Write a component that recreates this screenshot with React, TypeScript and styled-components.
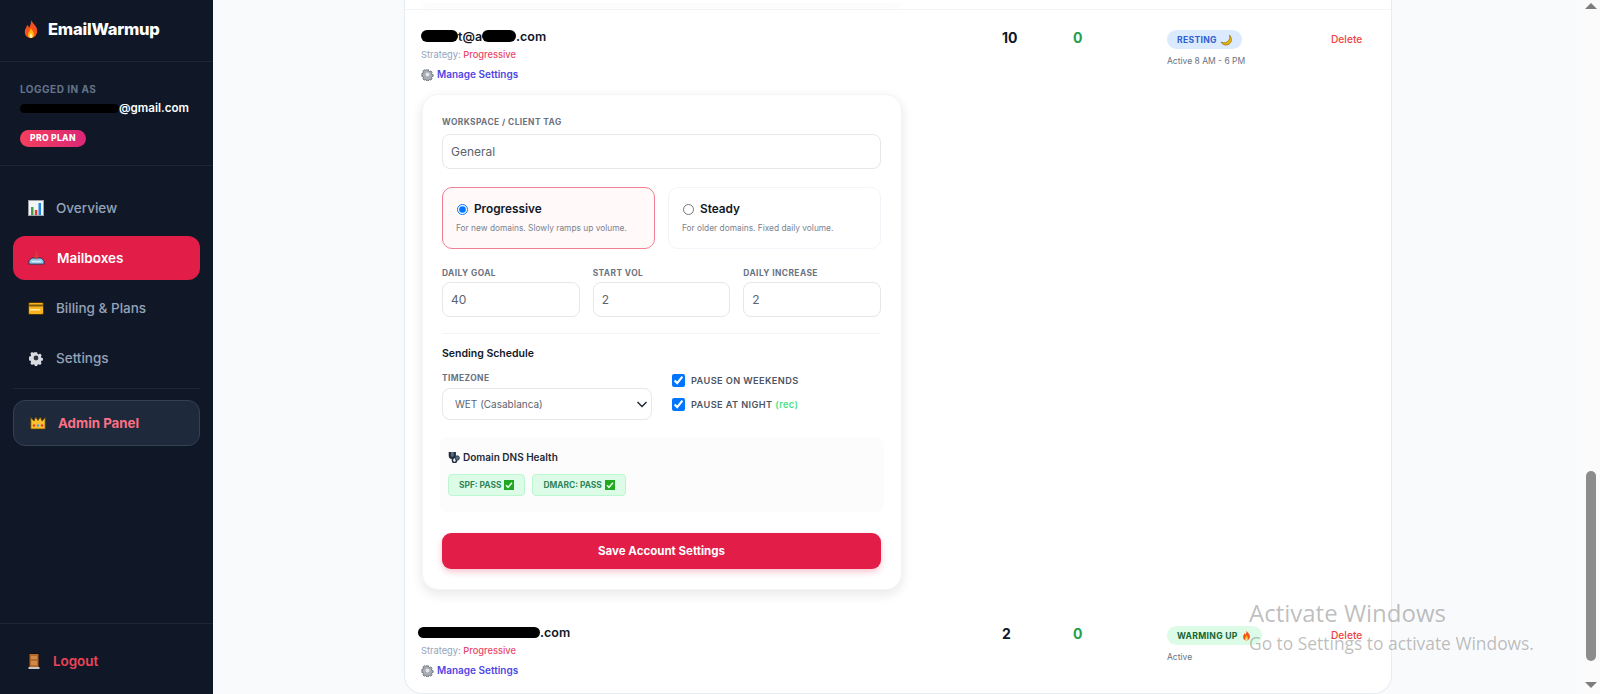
import React from 'react';
import styled, { createGlobalStyle } from 'styled-components';

const GlobalStyle = createGlobalStyle`
  html, body {
    margin: 0;
    height: 100%;
    overflow: hidden;
    font-family: Inter, "Liberation Sans", sans-serif;
    background: #f9fafc;
  }
  * { box-sizing: border-box; }
`;

const Shell = styled.div`
  display: flex;
  width: 1600px;
  height: 694px;
  overflow: hidden;
  position: relative;
`;

/* sidebar */
const Sidebar = styled.aside`
  width: 213px;
  flex: none;
  background: #101828;
  display: flex;
  flex-direction: column;
`;

const Brand = styled.div`
  height: 62px;
  display: flex;
  align-items: center;
  gap: 7px;
  padding: 0 0 3px 21px;
  color: #fff;
  font-size: 16.5px;
  font-weight: 800;
  letter-spacing: -0.2px;
  border-bottom: 1px solid #1a2536;
`;

const UserBox = styled.div`
  height: 104px;
  padding: 21px 20px 0;
  border-bottom: 1px solid #1a2536;
`;

const LoggedLabel = styled.div`
  font-size: 10px;
  font-weight: 700;
  letter-spacing: 0.5px;
  color: #64748b;
  line-height: 12px;
`;

const UserEmail = styled.div`
  margin-top: 5px;
  font-size: 11.6px;
  font-weight: 600;
  color: #fff;
  line-height: 16px;
  display: flex;
  align-items: center;
`;

const PlanPill = styled.span`
  display: inline-block;
  margin-top: 14px;
  padding: 0 10px;
  height: 17px;
  line-height: 17px;
  border-radius: 9px;
  font-size: 8.6px;
  font-weight: 800;
  letter-spacing: 0.3px;
  color: #fff;
  background: linear-gradient(90deg, #f43f5e, #db2777);
`;

const Nav = styled.nav`
  flex: 1;
  padding: 20px 13px 0 13px;
  display: flex;
  flex-direction: column;
`;

const NavItem = styled.div<{ $active?: boolean }>`
  height: 44px;
  margin-bottom: 6px;
  padding-left: 15px;
  display: flex;
  align-items: center;
  gap: 12px;
  border-radius: 12px;
  font-size: 13.5px;
  font-weight: ${(p) => (p.$active ? 600 : 500)};
  color: ${(p) => (p.$active ? '#fff' : '#94a3b8')};
  background: ${(p) => (p.$active ? '#e11d48' : 'transparent')};
`;

const NavDivider = styled.div`
  height: 1px;
  background: #1a2536;
  margin: 2px 0 11px;
`;

const AdminItem = styled.div`
  height: 46px;
  padding-left: 16px;
  display: flex;
  align-items: center;
  gap: 12px;
  border-radius: 12px;
  background: #1e293b;
  border: 1px solid #334155;
  font-size: 13.3px;
  font-weight: 700;
  color: #fb7185;
`;

const LogoutBox = styled.div`
  height: 71px;
  border-top: 1px solid #1a2536;
  padding: 3px 0 0 28px;
  display: flex;
  align-items: center;
  gap: 13px;
  font-size: 13.4px;
  font-weight: 600;
  color: #ef4458;
`;

/* main */
const Main = styled.main`
  flex: 1;
  min-width: 0;
  background: #f9fafc;
  padding: 0 0 0 191px;
  overflow: hidden;
`;

const Card = styled.div`
  width: 988px;
  height: 694px;
  background: #fff;
  border: 1px solid #e8ecf1;
  border-top: none;
  border-radius: 0 0 18px 18px;
  overflow: hidden;
`;

const PrevEdge = styled.div`
  height: 10px;
  border-bottom: 1px solid #f1f5f9;
  padding-left: 17px;
`;

const PrevShadow = styled.div`
  width: 480px;
  height: 3px;
  background: #fff;
  border-radius: 0 0 16px 16px;
  box-shadow: 0 3px 8px rgba(15, 23, 42, 0.06);
`;

const Row = styled.div<{ $top: number }>`
  display: grid;
  grid-template-columns: 581px 71px 94px 164px 1fr;
  padding: ${(p) => p.$top}px 16px 0;
`;

const RowMain = styled.div`
  min-width: 0;
`;

const Email = styled.div`
  height: 16px;
  display: flex;
  align-items: center;
  font-size: 12.5px;
  font-weight: 600;
  color: #0f172a;
`;

const Strategy = styled.div`
  margin-top: 5px;
  font-size: 9.3px;
  line-height: 12px;
  color: #94a3b8;
`;

const StrategyValue = styled.span`
  color: #e8486a;
  font-weight: 500;
`;

const ManageLink = styled.div`
  margin-top: 6px;
  height: 14px;
  display: flex;
  align-items: center;
  gap: 3px;
  font-size: 10px;
  font-weight: 600;
  color: #4f46e5;
`;

const Stat = styled.div<{ $green?: boolean }>`
  padding-top: 1px;
  font-size: 14px;
  font-weight: 700;
  line-height: 18px;
  color: ${(p) => (p.$green ? '#22a04f' : '#0f172a')};
`;

const StatusCell = styled.div`
  display: flex;
  flex-direction: column;
  align-items: flex-start;
`;

const StatusPill = styled.span<{ $tone: 'blue' | 'green' }>`
  height: 19px;
  margin-top: 2px;
  padding: 0 10px;
  display: inline-flex;
  align-items: center;
  gap: 3px;
  border-radius: 10px;
  font-size: 8.6px;
  font-weight: 700;
  letter-spacing: 0.3px;
  color: ${(p) => (p.$tone === 'blue' ? '#2f5fd0' : '#166534')};
  background: ${(p) => (p.$tone === 'blue' ? '#dbeafe' : '#dcfce7')};
`;

const StatusNote = styled.div`
  margin-top: 5.5px;
  font-size: 8.5px;
  line-height: 12px;
  color: #6b7280;
`;

const DeleteLink = styled.div`
  padding-top: 5px;
  font-size: 10.2px;
  font-weight: 500;
  line-height: 13px;
  color: #ef4444;
`;

/* settings panel */
const Panel = styled.div`
  width: 480px;
  height: 496px;
  margin: 13px 0 0 1px;
  padding: 21px 20px 0 19px;
  border: 1px solid #f1f5f9;
  border-radius: 16px;
  background: #fff;
  box-shadow: 0 4px 12px rgba(15, 23, 42, 0.1);
`;

const FieldLabel = styled.div`
  font-size: 8.4px;
  font-weight: 700;
  letter-spacing: 0.42px;
  line-height: 12px;
  color: #6b7280;
`;

const TextInput = styled.input<{ $gap?: number }>`
  display: block;
  width: 100%;
  height: 35px;
  margin-top: ${(p) => p.$gap ?? 6}px;
  padding: 0 8px;
  border: 1.5px solid #e5e7eb;
  border-radius: 8px;
  outline: none;
  background: #fff;
  font-family: inherit;
  font-size: 12px;
  color: #5b6470;
`;

const OptionRow = styled.div`
  display: grid;
  grid-template-columns: 1fr 1fr;
  gap: 13px;
  margin-top: 18px;
`;

const Option = styled.label<{ $selected?: boolean }>`
  height: 62px;
  padding: 13px 13px 0;
  border-radius: 10px;
  border: 1px solid ${(p) => (p.$selected ? '#f07f93' : '#f1f5f9')};
  background: ${(p) => (p.$selected ? '#fff9fa' : '#fff')};
  display: block;
`;

const OptionHead = styled.div`
  display: flex;
  align-items: center;
  gap: 6px;
  height: 16px;
  font-size: 11.8px;
  font-weight: 600;
  color: #111827;
`;

const Radio = styled.input`
  margin: 0 0 0 1px;
  width: 11px;
  height: 11px;
`;

const OptionHint = styled.div`
  margin-top: 6px;
  font-size: 8.35px;
  line-height: 11px;
  color: #7b8390;
`;

const NumberGrid = styled.div`
  display: grid;
  grid-template-columns: repeat(3, 1fr);
  gap: 13px;
  margin-top: 18px;
`;

const Separator = styled.div`
  height: 1px;
  margin-top: 16px;
  background: #f1f5f9;
`;

const SectionTitle = styled.div`
  margin-top: 13px;
  font-size: 10.5px;
  font-weight: 600;
  line-height: 13px;
  color: #111827;
`;

const ScheduleGrid = styled.div`
  display: grid;
  grid-template-columns: 210px 1fr;
  gap: 20px;
  margin-top: 12px;
`;

const SelectBox = styled.div`
  height: 32px;
  margin-top: 4px;
  padding: 0 1px 0 12px;
  border: 1px solid #e5e7eb;
  border-radius: 8px;
  display: flex;
  align-items: center;
  justify-content: space-between;
  font-size: 10px;
  color: #5b6470;
`;

const Checks = styled.div`
  display: flex;
  flex-direction: column;
  gap: 11px;
  margin-top: 2px;
`;

const CheckRow = styled.label`
  display: flex;
  align-items: center;
  gap: 6px;
  height: 13px;
  font-size: 9.2px;
  font-weight: 600;
  letter-spacing: 0.4px;
  color: #4b5563;
`;

const Check = styled.input`
  margin: 0;
  width: 13px;
  height: 13px;
`;

const RecNote = styled.span`
  color: #4ade80;
`;

const DnsBox = styled.div`
  width: 444px;
  height: 75px;
  margin: 17px 0 0 -2px;
  padding: 13px 8px 0;
  background: #fcfcfc;
  border-radius: 8px;
`;

const DnsTitle = styled.div`
  display: flex;
  align-items: center;
  gap: 3px;
  height: 14px;
  font-size: 10px;
  font-weight: 600;
  color: #1f2937;
`;

const DnsBadges = styled.div`
  display: flex;
  gap: 7px;
  margin-top: 10px;
`;

const DnsBadge = styled.span`
  height: 22px;
  padding: 0 10px;
  display: inline-flex;
  align-items: center;
  gap: 3px;
  border-radius: 4px;
  border: 1px solid #bbf7d0;
  background: #dcfce7;
  font-size: 8.4px;
  font-weight: 700;
  color: #2f855a;
`;

const SaveButton = styled.button`
  display: block;
  width: 100%;
  height: 36px;
  margin-top: 21px;
  border: none;
  border-radius: 9px;
  background: #e11d48;
  box-shadow: 0 3px 6px rgba(225, 29, 72, 0.25);
  font-family: inherit;
  font-size: 11.5px;
  font-weight: 700;
  color: #fff;
`;

/* scrollbar + overlay */
const Scrollbar = styled.div`
  width: 17px;
  flex: none;
  background: #fbfbfb;
  padding: 3px 2px 0 0;
  display: flex;
  flex-direction: column;
  align-items: center;
`;

const Thumb = styled.div`
  width: 10px;
  height: 190px;
  margin-top: 462px;
  border-radius: 5px;
  background: #8c8c8c;
`;

const ScrollArrow = styled.div<{ $up?: boolean }>`
  width: 0;
  height: 0;
  margin-top: ${(p) => (p.$up ? 0 : 21)}px;
  border-left: 6px solid transparent;
  border-right: 6px solid transparent;
  ${(p) => (p.$up ? 'border-bottom: 6px solid #7d7d7d;' : 'border-top: 6px solid #7d7d7d;')}
`;

const Watermark = styled.div`
  position: absolute;
  left: 1249px;
  top: 598px;
  color: rgba(110, 110, 110, 0.45);
  font-family: "Open Sans", sans-serif;
  pointer-events: none;
`;

const WatermarkTitle = styled.div`
  font-size: 24px;
  line-height: 30px;
`;

const WatermarkNote = styled.div`
  font-size: 17.4px;
  line-height: 30px;
`;

const Redaction = styled.span<{ $w: number; $h?: number; $shift?: number }>`
  display: inline-block;
  width: ${(p) => p.$w}px;
  height: ${(p) => p.$h ?? 12}px;
  margin-left: ${(p) => p.$shift ?? 0}px;
  background: #000;
  border-radius: 6px;
`;

/* emoji drawings */
const Ico = styled.svg`
  flex: none;
  display: block;
`;

const Fire = ({ s = 20 }: { s?: number }) => (
  <Ico width={s} height={s} viewBox="0 0 20 20">
    <path d="M10 1c1 3 5 5 6 9 1 5-2 9-6 9s-7-3-6-8c.4-2 2-3 2-5 1 .5 2 1.500 2 3 1-2 2.500-5 2-8z" fill="#f4511e" />
    <path d="M10 9c.5 2 3 3.500 3 6s-1.500 4-3 4-3.500-1.500-3-4c.3-1.500 2-3 3-6z" fill="#ffb300" />
    <path d="M10 14c.5 1 1.500 1.500 1.500 3s-.8 2-1.500 2-1.500-.7-1.500-2 1-2 1.500-3z" fill="#ffe9a8" />
  </Ico>
);

const Chart = () => (
  <Ico width={16} height={16} viewBox="0 0 16 16">
    <rect x="0.500" y="0.500" width="15" height="15" fill="#f5f5f5" stroke="#9aa0a6" />
    <rect x="3" y="7" width="2.500" height="8" fill="#43a047" />
    <rect x="6.800" y="10" width="2.500" height="5" fill="#e53935" />
    <rect x="10.500" y="3" width="2.500" height="12" fill="#1e88e5" />
  </Ico>
);

const Inbox = () => (
  <Ico width={17} height={16} viewBox="0 0 18 16">
    <path d="M4 8 1 11v3.500h16V11l-3-3z" fill="#8ec9ee" stroke="#23303f" strokeWidth="1" />
    <path d="M4 11h10v1.500H4z" fill="#dcebf5" />
    <path d="M7.800 1h2.400v5h2L9 9.500 5.800 6h2z" fill="#d9363e" />
  </Ico>
);

const CreditCard = () => (
  <Ico width={16} height={13} viewBox="0 0 16 13">
    <rect x="0.500" y="0.500" width="15" height="12" rx="1.500" fill="#f9b31c" stroke="#4a3508" />
    <rect x="1" y="2.500" width="14" height="2" fill="#7a5a0c" />
    <rect x="2" y="7" width="10" height="1.500" fill="#ffe9a8" />
  </Ico>
);

const Gear = ({ s = 16, c = '#d9dce1', hub = '#2f3642', rim }: { s?: number; c?: string; hub?: string; rim?: string }) => (
  <Ico width={s} height={s} viewBox="0 0 16 16">
    <path
      d="M6.600.8h2.800l.4 2 1.500.7 1.800-1 2 2-1 1.800.6 1.500 2 .4v2.800l-2 .4-.6 1.500 1 1.800-2 2-1.800-1-1.500.6-.4 2H6.600l-.4-2-1.500-.6-1.800 1-2-2 1-1.800-.6-1.500-2-.4V6.200l2-.4.6-1.500-1-1.800 2-2 1.800 1 1.500-.7z"
      transform="translate(1.600 1.600) scale(.8)"
      fill={c}
      stroke={rim}
      strokeWidth={rim ? 1 : 0}
    />
    <circle cx="8" cy="8" r="2.400" fill={hub} />
  </Ico>
);

const Crown = () => (
  <Ico width={16} height={14} viewBox="0 0 16 14">
    <path d="M.800 1.500 4 5l1.700-4L8 4.500 10.300 1 12 5l3.200-3.500V13H.800z" fill="#fbc02d" stroke="#5b4300" strokeWidth=".8" />
    <circle cx="4" cy="9.500" r="1.200" fill="#e53935" />
    <circle cx="8" cy="9.500" r="1.200" fill="#42a5f5" />
    <circle cx="12" cy="9.500" r="1.200" fill="#e53935" />
  </Ico>
);

const Door = () => (
  <Ico width={12} height={16} viewBox="0 0 12 16">
    <rect x="0.500" y="0" width="11" height="16" fill="#111" />
    <rect x="1.500" y="1" width="9" height="13" fill="#b5682c" />
    <rect x="3" y="3" width="6" height="3" fill="#cf8a4b" />
    <rect x="3" y="8" width="6" height="4" fill="#cf8a4b" />
    <rect x="0.500" y="14" width="11" height="2" fill="#c9c9c9" />
  </Ico>
);

const Moon = () => (
  <Ico width={12} height={12} viewBox="0 0 12 12">
    <path d="M9.500 1c1 3-.5 6.500-4 7.500-1.700.4-3.200.2-4.500-.5 1.200 2.200 3.500 3.500 6 3 3-.6 5-3.500 4.300-6.500-.3-1.500-1-2.700-1.800-3.500z" fill="#eab308" stroke="#7c5e10" strokeWidth=".6" />
  </Ico>
);

const Stethoscope = () => (
  <Ico width={12} height={12} viewBox="0 0 12 12">
    <path d="M1.800 1v3.500a2.500 2.500 0 0 0 5 0V1" fill="#5b7087" stroke="#1f2c3d" strokeWidth="2.200" />
    <path d="M4.500 7v2.500a2 2 0 0 0 4 0V8" fill="none" stroke="#1f2c3d" strokeWidth="1.600" />
    <circle cx="9.200" cy="7" r="2.200" fill="#5b7087" stroke="#1f2c3d" strokeWidth=".8" />
  </Ico>
);

const CheckEmoji = () => (
  <Ico width={10} height={10} viewBox="0 0 9 9">
    <rect width="9" height="9" fill="#22a722" />
    <path d="M1.800 4.800 3.600 6.600 7.200 2.400" fill="none" stroke="#e8ffe8" strokeWidth="1.300" />
  </Ico>
);

const Chevron = () => (
  <Ico width={16} height={16} viewBox="0 0 16 16">
    <path d="M3.500 6 8 10.500 12.500 6" fill="none" stroke="#1f2937" strokeWidth="1.500" />
  </Ico>
);

const ManageGear = () => <Gear s={13} c="#a8adb5" hub="#e4e6ea" rim="#4b5563" />;

const App: React.FC = () => {
  return (
    <Shell>
      <GlobalStyle />
      <Sidebar>
        <Brand>
          <Fire />
          EmailWarmup
        </Brand>
        <UserBox>
          <LoggedLabel>LOGGED IN AS</LoggedLabel>
          <UserEmail>
            <Redaction $w={99} $h={9} />
            @gmail.com
          </UserEmail>
          <PlanPill>PRO PLAN</PlanPill>
        </UserBox>
        <Nav>
          <NavItem><Chart />Overview</NavItem>
          <NavItem $active><Inbox />Mailboxes</NavItem>
          <NavItem><CreditCard />Billing &amp; Plans</NavItem>
          <NavItem><Gear />Settings</NavItem>
          <NavDivider />
          <AdminItem><Crown />Admin Panel</AdminItem>
        </Nav>
        <LogoutBox>
          <Door />
          Logout
        </LogoutBox>
      </Sidebar>

      <Main>
        <Card>
          <PrevEdge>
            <PrevShadow />
          </PrevEdge>
          <Row $top={18}>
            <RowMain>
              <Email>
                <Redaction $w={37} />t@a<Redaction $w={34} />.com
              </Email>
              <Strategy>
                Strategy: <StrategyValue>Progressive</StrategyValue>
              </Strategy>
              <ManageLink>
                <ManageGear />
                Manage Settings
              </ManageLink>
              <Panel>
                <FieldLabel>WORKSPACE / CLIENT TAG</FieldLabel>
                <TextInput readOnly value="General" />
                <OptionRow>
                  <Option $selected>
                    <OptionHead>
                      <Radio type="radio" name="strategy" defaultChecked />
                      Progressive
                    </OptionHead>
                    <OptionHint>For new domains. Slowly ramps up volume.</OptionHint>
                  </Option>
                  <Option>
                    <OptionHead>
                      <Radio type="radio" name="strategy" />
                      Steady
                    </OptionHead>
                    <OptionHint>For older domains. Fixed daily volume.</OptionHint>
                  </Option>
                </OptionRow>
                <NumberGrid>
                  <div>
                    <FieldLabel>DAILY GOAL</FieldLabel>
                    <TextInput $gap={3} readOnly value="40" />
                  </div>
                  <div>
                    <FieldLabel>START VOL</FieldLabel>
                    <TextInput $gap={3} readOnly value="2" />
                  </div>
                  <div>
                    <FieldLabel>DAILY INCREASE</FieldLabel>
                    <TextInput $gap={3} readOnly value="2" />
                  </div>
                </NumberGrid>
                <Separator />
                <SectionTitle>Sending Schedule</SectionTitle>
                <ScheduleGrid>
                  <div>
                    <FieldLabel>TIMEZONE</FieldLabel>
                    <SelectBox>
                      WET (Casablanca)
                      <Chevron />
                    </SelectBox>
                  </div>
                  <Checks>
                    <CheckRow>
                      <Check type="checkbox" defaultChecked />
                      PAUSE ON WEEKENDS
                    </CheckRow>
                    <CheckRow>
                      <Check type="checkbox" defaultChecked />
                      <span>PAUSE AT NIGHT <RecNote>(rec)</RecNote></span>
                    </CheckRow>
                  </Checks>
                </ScheduleGrid>
                <DnsBox>
                  <DnsTitle>
                    <Stethoscope />
                    Domain DNS Health
                  </DnsTitle>
                  <DnsBadges>
                    <DnsBadge>SPF: PASS <CheckEmoji /></DnsBadge>
                    <DnsBadge>DMARC: PASS <CheckEmoji /></DnsBadge>
                  </DnsBadges>
                </DnsBox>
                <SaveButton>Save Account Settings</SaveButton>
              </Panel>
            </RowMain>
            <Stat>10</Stat>
            <Stat $green>0</Stat>
            <StatusCell>
              <StatusPill $tone="blue">RESTING <Moon /></StatusPill>
              <StatusNote>Active 8 AM - 6 PM</StatusNote>
            </StatusCell>
            <DeleteLink>Delete</DeleteLink>
          </Row>
          <Row $top={34}>
            <RowMain>
              <Email>
                <Redaction $w={122} $h={11} $shift={-3} />.com
              </Email>
              <Strategy>
                Strategy: <StrategyValue>Progressive</StrategyValue>
              </Strategy>
              <ManageLink>
                <ManageGear />
                Manage Settings
              </ManageLink>
            </RowMain>
            <Stat>2</Stat>
            <Stat $green>0</Stat>
            <StatusCell>
              <StatusPill $tone="green">WARMING UP <Fire s={11} /></StatusPill>
              <StatusNote>Active</StatusNote>
            </StatusCell>
            <DeleteLink>Delete</DeleteLink>
          </Row>
        </Card>
      </Main>

      <Scrollbar>
        <ScrollArrow $up />
        <Thumb />
        <ScrollArrow />
      </Scrollbar>

      <Watermark>
        <WatermarkTitle>Activate Windows</WatermarkTitle>
        <WatermarkNote>Go to Settings to activate Windows.</WatermarkNote>
      </Watermark>
    </Shell>
  );
};

export default App;
